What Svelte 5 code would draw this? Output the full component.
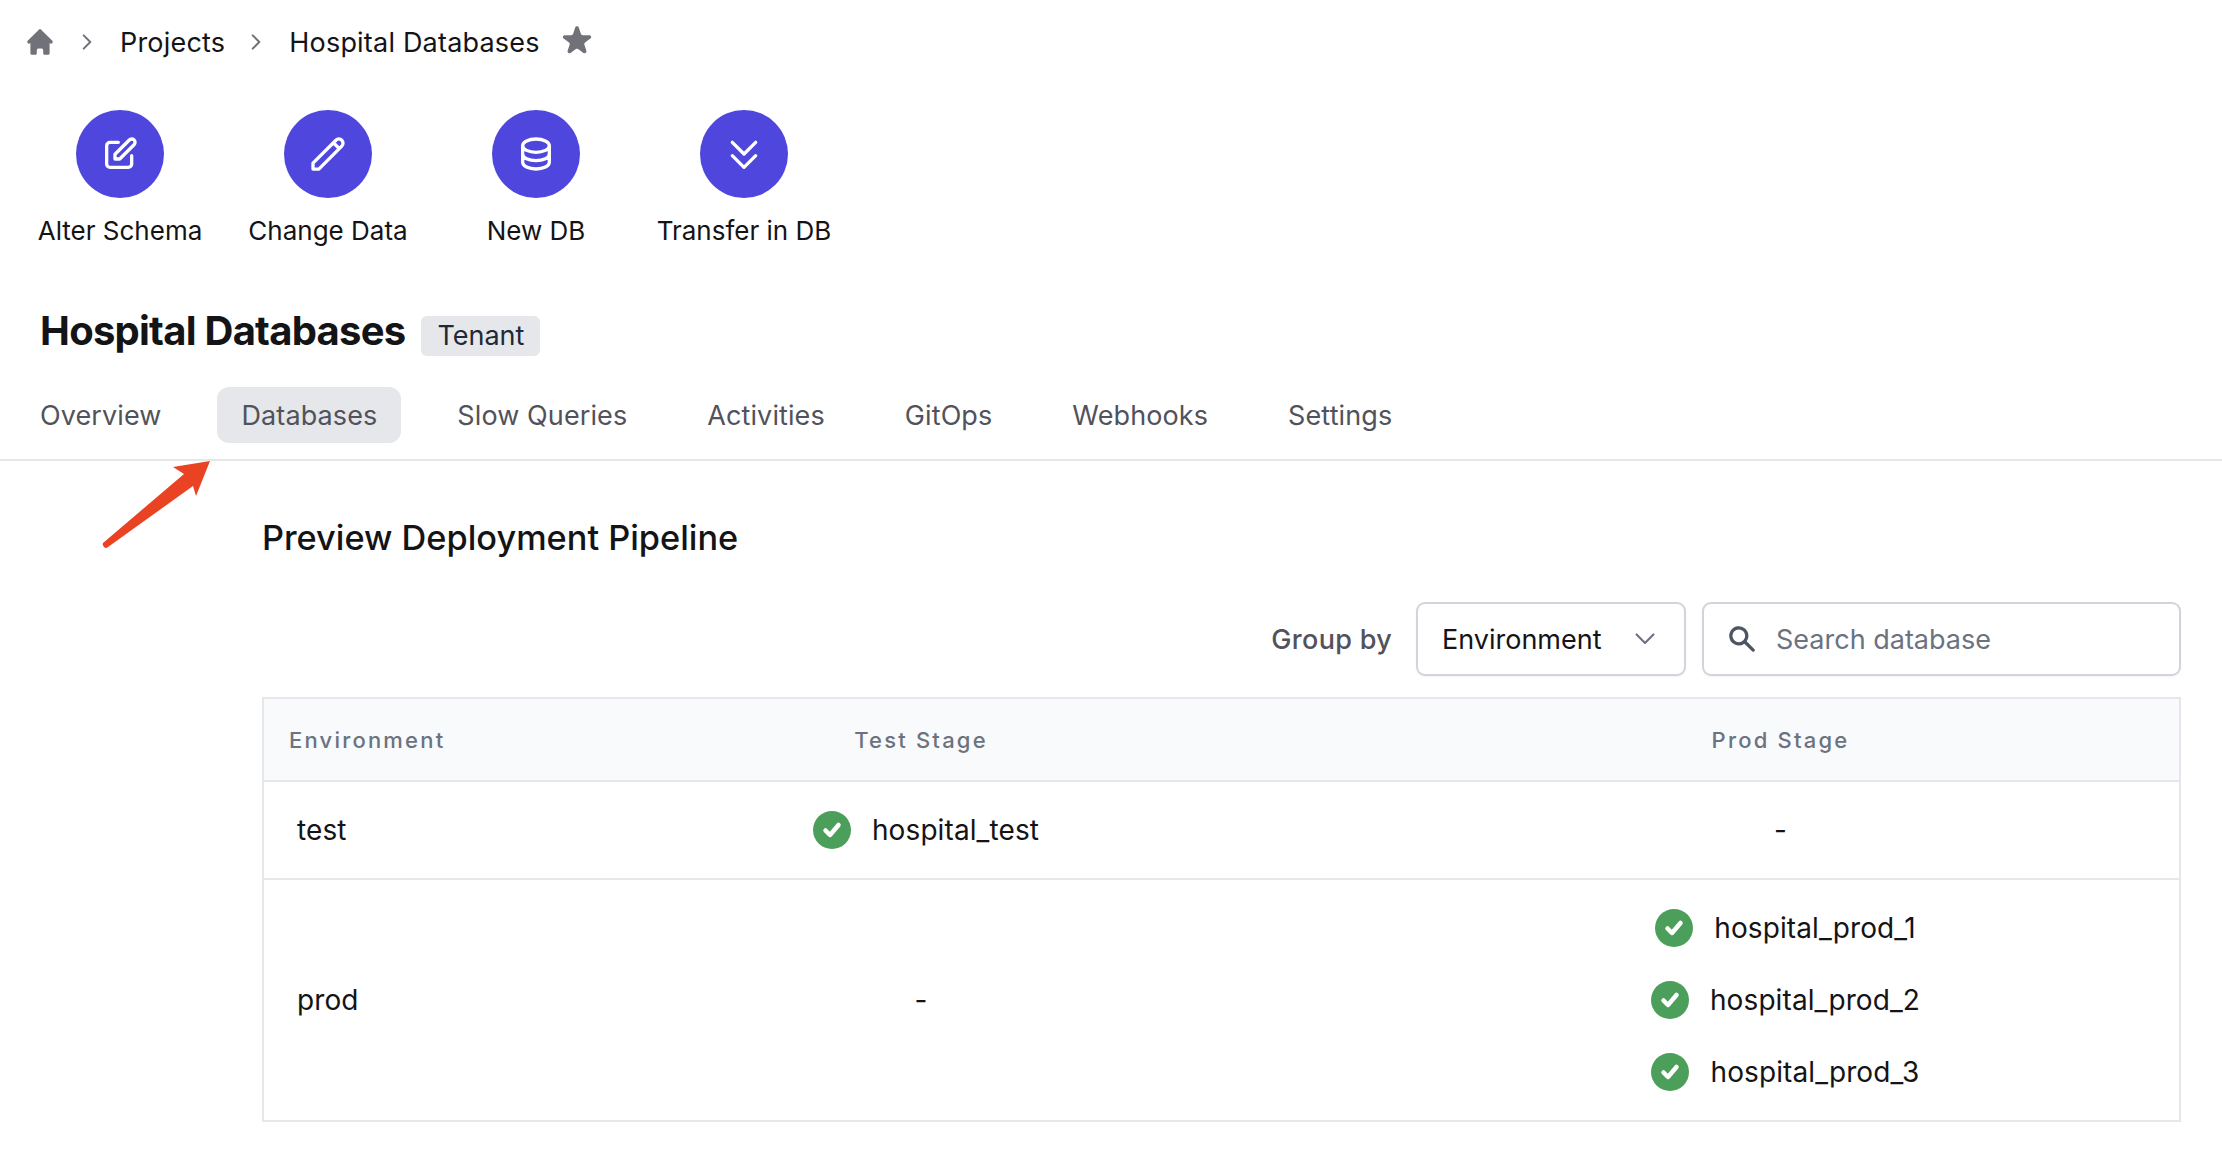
<script lang="ts">
	const actions = [
		{ label: "Alter Schema", d: "M11 5H6a2 2 0 00-2 2v11a2 2 0 002 2h11a2 2 0 002-2v-5m-1.414-9.414a2 2 0 112.828 2.828L11.828 15H9v-2.828l8.586-8.586z" },
		{ label: "Change Data", d: "M15.232 5.232l3.536 3.536m-2.036-5.036a2.5 2.5 0 113.536 3.536L6.5 21.036H3v-3.572L16.732 3.732z" },
		{ label: "New DB", d: "M4 7v10c0 2.21 3.582 4 8 4s8-1.79 8-4V7M4 7c0 2.21 3.582 4 8 4s8-1.79 8-4M4 7c0-2.21 3.582-4 8-4s8 1.79 8 4m0 5c0 2.21-3.582 4-8 4s-8-1.79-8-4" },
		{ label: "Transfer in DB", d: "M19 13l-7 7-7-7m14-8l-7 7-7-7" },
	];
	const tabs = ["Overview", "Databases", "Slow Queries", "Activities", "GitOps", "Webhooks", "Settings"];
	const activeTab = "Databases";
	const prodDbs = ["hospital_prod_1", "hospital_prod_2", "hospital_prod_3"];
</script>

{#snippet check()}
	<svg class="check" viewBox="0 0 38 38" aria-hidden="true">
		<circle cx="19" cy="19" r="19" fill="#4c9f5a" />
		<path d="M12.500 19.500l4.500 4.500 8.500-10" fill="none" stroke="#fff" stroke-width="4.500" stroke-linecap="round" stroke-linejoin="round" />
	</svg>
{/snippet}

<div class="page">
	<nav class="crumbs">
		<svg class="home" viewBox="0 0 20 20" fill="#71717a" aria-hidden="true">
			<path d="M10.707 2.293a1 1 0 00-1.414 0l-7 7a1 1 0 001.414 1.414L4 10.414V17a1 1 0 001 1h2a1 1 0 001-1v-2a1 1 0 011-1h2a1 1 0 011 1v2a1 1 0 001 1h2a1 1 0 001-1v-6.586l.293.293a1 1 0 001.414-1.414l-7-7z" />
		</svg>
		<svg class="chev" viewBox="0 0 12 20" aria-hidden="true"><path d="M3 4l6 6-6 6" /></svg>
		<span>Projects</span>
		<svg class="chev" viewBox="0 0 12 20" aria-hidden="true"><path d="M3 4l6 6-6 6" /></svg>
		<span>Hospital Databases</span>
		<svg class="star" viewBox="0 0 20 20" fill="#71717a" aria-hidden="true">
			<path d="M9.049 2.927c.3-.921 1.603-.921 1.902 0l1.07 3.292a1 1 0 00.95.69h3.462c.969 0 1.371 1.24.588 1.81l-2.8 2.034a1 1 0 00-.364 1.118l1.07 3.292c.3.921-.755 1.688-1.54 1.118l-2.8-2.034a1 1 0 00-1.175 0l-2.8 2.034c-.784.57-1.838-.197-1.539-1.118l1.07-3.292a1 1 0 00-.364-1.118L2.98 8.72c-.783-.57-.38-1.81.588-1.81h3.461a1 1 0 00.951-.69l1.07-3.292z" />
		</svg>
	</nav>

	<div class="actions">
		{#each actions as a (a.label)}
			<div class="action">
				<span class="circle">
					<svg viewBox="0 0 24 24" fill="none" stroke="#fff" stroke-width="2" stroke-linecap="round" stroke-linejoin="round" aria-hidden="true">
						<path d={a.d} />
					</svg>
				</span>
				<span class="action-label">{a.label}</span>
			</div>
		{/each}
	</div>

	<div class="title-row">
		<h1>Hospital Databases</h1>
		<span class="tag">Tenant</span>
	</div>

	<div class="tabs">
		{#each tabs as t (t)}
			<span class="tab" class:active={t === activeTab}>{t}</span>
		{/each}
	</div>

	<main class="content">
		<h2>Preview Deployment Pipeline</h2>

		<div class="toolbar">
			<span class="group-label">Group by</span>
			<div class="select">
				<span>Environment</span>
				<svg viewBox="0 0 20 20" aria-hidden="true"><path d="M3.5 6.5L10 13l6.500-6.500" /></svg>
			</div>
			<div class="search">
				<svg viewBox="0 0 20 20" fill="#4b5563" aria-hidden="true">
					<path fill-rule="evenodd" clip-rule="evenodd" d="M8 4a4 4 0 100 8 4 4 0 000-8zM2 8a6 6 0 1110.89 3.476l4.817 4.817a1 1 0 01-1.414 1.414l-4.816-4.816A6 6 0 012 8z" />
				</svg>
				<span>Search database</span>
			</div>
		</div>

		<table>
			<colgroup>
				<col class="col-env" />
				<col class="col-test" />
				<col />
			</colgroup>
			<thead>
				<tr>
					<th class="left">Environment</th>
					<th>Test Stage</th>
					<th>Prod Stage</th>
				</tr>
			</thead>
			<tbody>
				<tr class="row-test">
					<td class="left">test</td>
					<td>
						<div class="db-list">
							<div class="db">{@render check()}<span>hospital_test</span></div>
						</div>
					</td>
					<td>-</td>
				</tr>
				<tr class="row-prod">
					<td class="left">prod</td>
					<td>-</td>
					<td>
						<div class="db-list">
							{#each prodDbs as db (db)}
								<div class="db">{@render check()}<span>{db}</span></div>
							{/each}
						</div>
					</td>
				</tr>
			</tbody>
		</table>
	</main>

	<svg class="arrow" viewBox="0 0 120 96" aria-hidden="true">
		<path d="M110 1L73 7l11 7L3 83q-1 2 1 4t4 0L93 26l3 10z" fill="#ea4323" />
	</svg>
</div>

<style>
	:global(body) {
		background: #fff;
	}

	.page {
		position: relative;
		width: 2222px;
		height: 1150px;
		overflow: hidden;
		font-family: Inter, "Liberation Sans", sans-serif;
		font-size: 26px;
		color: #141416;
		box-sizing: border-box;
	}

	.crumbs {
		display: flex;
		align-items: center;
		height: 84px;
		padding-left: 24px;
		font-size: 27px;
		letter-spacing: 0.2px;
	}

	.home {
		width: 32px;
		height: 32px;
		margin-right: 24px;
	}

	.chev {
		width: 14px;
		height: 22px;
		margin-right: 26px;
		fill: none;
		stroke: #71717a;
		stroke-width: 1.8;
		stroke-linecap: round;
		stroke-linejoin: round;
	}

	.crumbs span:nth-of-type(1) {
		margin-right: 24px;
	}

	.star {
		width: 38px;
		height: 38px;
		margin-left: 18px;
		margin-top: -3px;
	}

	.actions {
		display: flex;
		padding: 26px 0 0 16px;
	}

	.action {
		display: flex;
		flex-direction: column;
		align-items: center;
		width: 208px;
		gap: 15px;
	}

	.circle {
		display: flex;
		align-items: center;
		justify-content: center;
		width: 88px;
		height: 88px;
		border-radius: 50%;
		background: #4f46dd;
	}

	.circle svg {
		width: 40px;
		height: 40px;
	}

	.action-label {
		line-height: 36px;
		white-space: nowrap;
	}

	.title-row {
		display: flex;
		align-items: center;
		gap: 16px;
		height: 48px;
		margin-top: 58px;
		padding-left: 40px;
	}

	h1 {
		margin: 0;
		font-size: 40px;
		font-weight: 700;
		letter-spacing: -0.75px;
		line-height: 48px;
	}

	.tag {
		display: flex;
		align-items: center;
		height: 40px;
		margin-top: 9px;
		padding: 0 16px;
		border-radius: 6px;
		background: #e5e7eb;
		color: #1f2937;
		font-size: 27px;
	}

	.tabs {
		display: flex;
		gap: 32px;
		height: 56px;
		margin-top: 32px;
		padding: 0 0 16px 16px;
		border-bottom: 2px solid #e5e7eb;
		font-size: 27px;
		letter-spacing: 0.1px;
	}

	.tab {
		display: flex;
		align-items: center;
		padding: 0 24px;
		border-radius: 12px;
		color: #52525b;
	}

	.tab.active {
		background: #e5e7eb;
	}

	.content {
		padding: 51px 41px 0 262px;
	}

	h2 {
		margin: 0;
		font-size: 34.300px;
		font-weight: 500;
		line-height: 52px;
	}

	.toolbar {
		display: flex;
		align-items: center;
		justify-content: flex-end;
		margin-top: 38px;
		font-size: 27px;
	}

	.group-label {
		margin-right: 24px;
		color: #52525b;
		font-weight: 500;
		letter-spacing: 0.3px;
	}

	.select,
	.search {
		display: flex;
		align-items: center;
		box-sizing: border-box;
		height: 74px;
		border: 2px solid #d1d5db;
		border-radius: 9px;
		box-shadow: 0 1px 2px rgba(0, 0, 0, 0.05);
	}

	.select {
		justify-content: space-between;
		width: 270px;
		padding: 0 26px 0 24px;
	}

	.select svg {
		width: 26px;
		height: 26px;
		fill: none;
		stroke: #6b7280;
		stroke-width: 1.6;
		stroke-linecap: round;
		stroke-linejoin: round;
	}

	.search {
		gap: 18px;
		width: 479px;
		margin-left: 16px;
		padding-left: 22px;
		color: #6b7280;
	}

	.search svg {
		width: 32px;
		height: 32px;
	}

	table {
		box-sizing: border-box;
		width: 1919px;
		margin-top: 21px;
		border: 2px solid #e5e7eb;
		border-collapse: collapse;
		table-layout: fixed;
	}

	.col-env {
		width: 197px;
	}

	.col-test {
		width: 922px;
	}

	th {
		height: 81px;
		padding: 0;
		border-bottom: 2px solid #e5e7eb;
		background: #f9fafb;
		color: #6b7280;
		font-size: 22px;
		font-weight: 500;
		letter-spacing: 2.2px;
		text-align: center;
	}

	th.left {
		padding-left: 25px;
		text-align: left;
	}

	td {
		padding: 0;
		font-size: 28px;
		letter-spacing: 0.1px;
		text-align: center;
	}

	td.left {
		padding-left: 33px;
		text-align: left;
	}

	.row-test td {
		height: 96px;
		border-bottom: 2px solid #e5e7eb;
	}

	.row-prod td {
		height: 240px;
	}

	.db-list {
		display: flex;
		flex-direction: column;
		align-items: center;
		gap: 34px;
		padding-left: 10px;
	}

	.db {
		display: flex;
		align-items: center;
		gap: 21px;
	}

	.check {
		flex: none;
		width: 38px;
		height: 38px;
	}

	.arrow {
		position: absolute;
		left: 100px;
		top: 460px;
		width: 120px;
		height: 96px;
	}
</style>
